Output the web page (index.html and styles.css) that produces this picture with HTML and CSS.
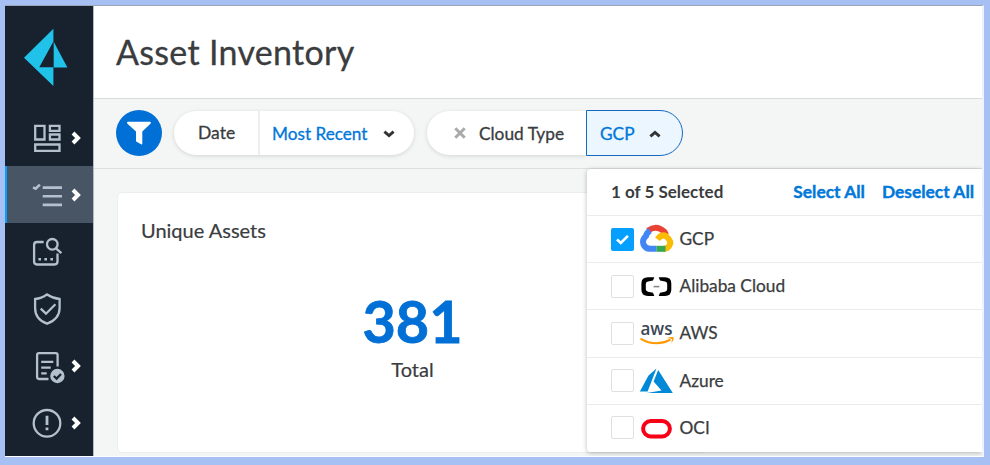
FILE: index.html
```html
<!DOCTYPE html>
<html lang="en">
<head>
<meta charset="utf-8">
<title>Asset Inventory</title>
<link rel="stylesheet" href="styles.css">
</head>
<body>
<div class="app">
  <nav class="sidebar">
    <div class="logo">
      <svg width="88" height="103" viewBox="5 6 88 103"><path fill="#21c2e9" d="M24 57.7 53.4 28.8V41.6L39.3 67.2H53.4V86Z"/><path fill="#21c2e9" d="M53.7 41.8 67.4 67.4H53.7Z"/></svg>
    </div>
    <a class="nav-item"><svg class="icon" viewBox="31 121 32 33"><path d="M35.2 125.9h9.3v13.6h-9.3zM49.9 125.9h9.6v4.9h-9.6zM49.9 134.5h9.6v5h-9.6zM35.2 144.5h24.3v6.3H35.2z"/></svg><svg class="chevron" viewBox="0 0 10 16"><path d="M2 3 7 8 2 13"/></svg></a>
    <a class="nav-item active"><svg class="icon" viewBox="31 178 32 33"><path stroke-width="2.6" d="M42.7 187.6H62M42.7 196.2H62M42.7 204.9H62M33 187.4l2.6 1.2 4.3-4"/></svg><svg class="chevron" viewBox="0 0 10 16"><path d="M2 3 7 8 2 13"/></svg></a>
    <a class="nav-item"><svg class="icon" viewBox="31 235 32 33"><path d="M43.7 242H37q-2.9 0-2.9 2.9V261.6q0 2.9 2.9 2.9H54.6q2.9 0 2.9-2.9V253.5"/><circle cx="52.3" cy="244.3" r="5.3"/><path d="M56 248.3 61.4 253.2"/><path stroke-width="2.6" stroke-dasharray="2.6 3.4" d="M38.4 259.2H53.2"/></svg></a>
    <a class="nav-item"><svg class="icon" viewBox="31 292 32 33"><path d="M47 294.5Q53 298.5 59.6 299V308C59.6 316.5 53.5 321.3 47 323.7C40.5 321.3 35.1 316.5 35.1 308V299Q41.5 298.5 47 294.5ZM40.7 308.7 46 313.7 55.4 304.3"/></svg></a>
    <a class="nav-item"><svg class="icon" viewBox="31 349 32 33"><path d="M48.5 379H39q-1.9 0-1.9-1.9V355q0-1.9 1.9-1.9H55.7q1.9 0 1.9 1.9V366.5M41.2 361.8H53.3M41.2 367.6H50.7M41.2 373.4H46.7"/><circle class="solid" cx="57.4" cy="376" r="7.2"/><path class="cut" d="M53.8 376 56.6 378.6 61 374"/></svg><svg class="chevron" viewBox="0 0 10 16"><path d="M2 3 7 8 2 13"/></svg></a>
    <a class="nav-item"><svg class="icon" viewBox="31 406 32 33"><circle cx="47" cy="423.3" r="13.3"/><path stroke-width="2.8" d="M47 415.8V425M47 427.5V430.2"/></svg><svg class="chevron" viewBox="0 0 10 16"><path d="M2 3 7 8 2 13"/></svg></a>
  </nav>
  <main class="main">
    <header class="header"><h1>Asset Inventory</h1></header>
    <section class="filters">
      <button class="filter-btn"><svg width="46" height="46" viewBox="0 0 46 46"><path fill="#fff" d="M11 12.5q0-.8.9-.8H34q.9 0 .9.8 0 .7-.7 1.4L26.3 21.5V33.6q0 1.3-1.2.7L20.5 31.7Q20 31.4 20 30.7V21.5L11.7 13.9Q11 13.2 11 12.5Z"/></svg></button>
      <div class="pill date"><span class="label">Date</span><span class="value">Most Recent<svg class="caret" width="12" height="8" viewBox="0 0 12 8"><path d="M1.4 1.7 6 5.7 10.6 1.7"/></svg></span></div>
      <div class="pill cloud"><svg class="remove" width="12" height="12" viewBox="0 0 12 12"><path d="M1.3 1.3 10.7 10.7M10.7 1.3 1.3 10.7"/></svg><span class="label">Cloud Type</span></div>
      <div class="open-value">GCP<svg class="caret" width="12" height="8" viewBox="0 0 12 8"><path d="M1.4 6.3 6 2.3 10.6 6.3"/></svg></div>
    </section>
    <section class="content">
      <article class="card">
        <h2>Unique Assets</h2>
        <div class="metric"><strong>381</strong><span>Total</span></div>
      </article>
    </section>
    <div class="dropdown">
      <div class="drop-head"><b>1 of 5 Selected</b><a class="select">Select All</a><a class="deselect">Deselect All</a></div>
      <label class="option"><span class="box checked"><svg width="23" height="23" viewBox="0 0 23 23"><path d="M6 11.5 9.8 15 16.9 7.8"/></svg></span>
        <svg class="brand" viewBox="640 224 34 30"><g fill="none" stroke-width="6"><path stroke="#ea4335" d="M648 230.6Q656.5 224.4 664.3 231.6L666.2 235"/><path stroke="#fbbc05" d="M657.5 239.2Q661.5 233.8 665.8 236Q672.5 241.5 669.3 245.7Q667.5 248.8 663.5 248.8"/><path stroke="#34a853" d="M656.3 248.8H665.5"/><path stroke="#4285f4" d="M650 230.5Q646.5 233 646 236Q641.8 239.5 643.5 244.5Q645.3 248.8 650 248.8H656.3"/></g></svg><span>GCP</span></label>
      <label class="option"><span class="box"></span>
        <svg class="brand" viewBox="640 271 34 30"><path fill="#000" d="M654.3 277.3H648Q641.4 277.3 641.4 283.5V289.8Q641.4 296 648 296H654.3L653 292.8 648 291.7Q645.8 291.3 645.8 289.3V284Q645.8 282 648 281.6L653 280.5ZM658.7 277.3H665Q671.3 277.3 671.3 283.5V289.8Q671.3 296 665 296H658.7L660 292.8 665 291.7Q667.2 291.3 667.2 289.3V284Q667.2 282 665 281.6L660 280.5Z"/><path fill="#888" d="M653.6 285.8H659.4V287.4H653.6Z"/></svg><span>Alibaba Cloud</span></label>
      <label class="option"><span class="box"></span>
        <svg class="brand" viewBox="640 318 34 30"><text class="aws" x="640.5" y="335" textLength="32" lengthAdjust="spacingAndGlyphs">aws</text><path fill="none" stroke="#f90" stroke-width="2" d="M640.5 338.6Q655.5 347.500 670.500 339.600"/><path fill="#f90" d="M667 338Q674.500 335.800 673.700 338.500Q673.200 341 671.300 343L672 338.900Z"/></svg><span>AWS</span></label>
      <label class="option"><span class="box"></span>
        <svg class="brand" viewBox="640 365 34 30"><path fill="#0089d6" d="M656.5 367.5 648.5 374.6 639.9 390.6H647.6ZM658.2 368.9 672.8 392H646.8L661.5 389.4 653.6 380.6Z"/></svg><span>Azure</span></label>
      <label class="option"><span class="box"></span>
        <svg class="brand" viewBox="640 412.5 34 30"><rect x="643.1" y="420.6" width="26.8" height="15.3" rx="7.65" fill="none" stroke="#f80016" stroke-width="4"/></svg><span>OCI</span></label>
    </div>
  </main>
</div>
</body>
</html>
```
FILE: styles.css
```css
* { box-sizing: border-box; }
body {
  margin: 0;
  height: 465px;
  padding: 5px 6px 8px 5px;
  background: #a6c0f3;
  color: #3a3c3e;
  font-family: Lato, "Liberation Sans", sans-serif;
  font-size: 17.3px;
  overflow: hidden;
}
.app {
  display: flex;
  height: 452px;
  border-top: 1px solid #9ba5b8;
  border-right: 2px solid #eef3fd;
  border-bottom: 1px solid #fff;
  overflow: hidden;
}
.sidebar { flex: 0 0 89px; background: #17222e; border-right: 1px solid #b5bbc0; }
.logo { height: 103px; }
.logo svg { display: block; }
.nav-item { display: flex; align-items: center; height: 57px; padding-left: 26px; }
.nav-item.active { background: #475565; padding-left: 24px; border-left: 2px solid #0a9cff; }
.icon { width: 32px; height: 33px; overflow: visible; fill: none; stroke: #b4c0cd; stroke-width: 2.3; }
.icon .solid { fill: #b4c0cd; stroke: none; }
.icon .cut { stroke: #17222e; }
.chevron { width: 10px; height: 16px; margin-left: 8px; fill: none; stroke: #fff; stroke-width: 4; }
.main { position: relative; flex: 1; display: flex; flex-direction: column; background: #f4f5f5; }
.header { height: 93px; padding: 0 0 2px 22px; background: #fff; border-bottom: 1px solid #d9dadb; display: flex; align-items: center; }
h1 { margin: 0; font-size: 34px; font-weight: 400; letter-spacing: .3px; -webkit-text-stroke: .3px; }
.filters { display: flex; align-items: center; height: 70px; padding: 0 0 1px 22px; border-bottom: 1px solid #dcdedf; }
.filter-btn { width: 46px; height: 46px; padding: 0; border: 0; border-radius: 50%; background: #006fd6; }
.filter-btn svg { display: block; }
.pill { display: flex; align-items: center; height: 44px; background: #fff; border-radius: 22px; box-shadow: 0 1px 4px #0002; -webkit-text-stroke: .3px; }
.date { width: 240px; margin-left: 12px; }
.date .label { width: 86px; padding-left: 24px; height: 44px; line-height: 44px; border-right: 2px solid #eee; font-size: 17.5px; }
.value { display: flex; align-items: center; padding-left: 12px; color: #0077d9; white-space: nowrap; font-size: 17.2px; }
.caret { margin: 2px 0 0 15px; fill: none; stroke: #333; stroke-width: 2.9; }
.cloud { width: 159px; margin-left: 13px; padding-left: 27px; border-radius: 22px 0 0 22px; }
.cloud .label { margin-left: 13px; white-space: nowrap; }
.remove { stroke: #aaa; stroke-width: 3; }
.open-value { width: 97px; height: 46px; padding-left: 13px; display: flex; align-items: center; color: #0077d9; background: #ebf6ff; border: 1.5px solid #1769c2; border-radius: 0 23px 23px 0; -webkit-text-stroke: .3px; }
.open-value .caret { margin-left: 14px; }
.content { padding: 23px 0 0 23px; }
.card { height: 261px; padding: 25px 23px; background: #fff; border: 1px solid #eceded; border-radius: 5px; width: 590px; }
h2 { margin: 0; font-size: 20px; line-height: 24px; font-weight: 400; -webkit-text-stroke: .2px; }
.metric { display: flex; flex-direction: column; align-items: center; padding: 45px 0 0 1px; }
.metric strong { color: #006fd6; font-size: 57.5px; line-height: 68px; font-weight: 700; -webkit-text-stroke: .8px; }
.metric span { margin-top: 2px; font-size: 20px; line-height: 24px; -webkit-text-stroke: .2px; }
.dropdown { position: absolute; left: 493px; top: 163px; width: 395px; height: 283px; background: #fff; border-radius: 4px 0 0 4px; box-shadow: 0 1px 5px #0004; }
.drop-head { display: flex; align-items: center; height: 46px; padding: 0 0 2px 24px; white-space: nowrap; font-size: 17px; }
.drop-head a { color: #0077d9; font-weight: 700; font-size: 17.4px; -webkit-text-stroke: .4px; }
.select { margin-left: 70px; }
.deselect { margin-left: 17px; }
.option { display: flex; align-items: center; height: 47.2px; padding-left: 24px; border-top: 1.5px solid #eaebeb; -webkit-text-stroke: .25px; }
.box { width: 23px; height: 23px; border: 1.5px solid #dfe0e1; border-radius: 2px; background: #fff; }
.box.checked { border: 0; background: #059fff; }
.box svg { display: block; fill: none; stroke: #fff; stroke-width: 2.6; }
.brand { width: 34px; height: 30px; margin: 0 5.5px 0 6px; overflow: visible; -webkit-text-stroke: 0; }
.option > span:last-child { margin-top: -1px; }
.aws { font: 600 18px "Open Sans", sans-serif; fill: #3c4856; }
```
